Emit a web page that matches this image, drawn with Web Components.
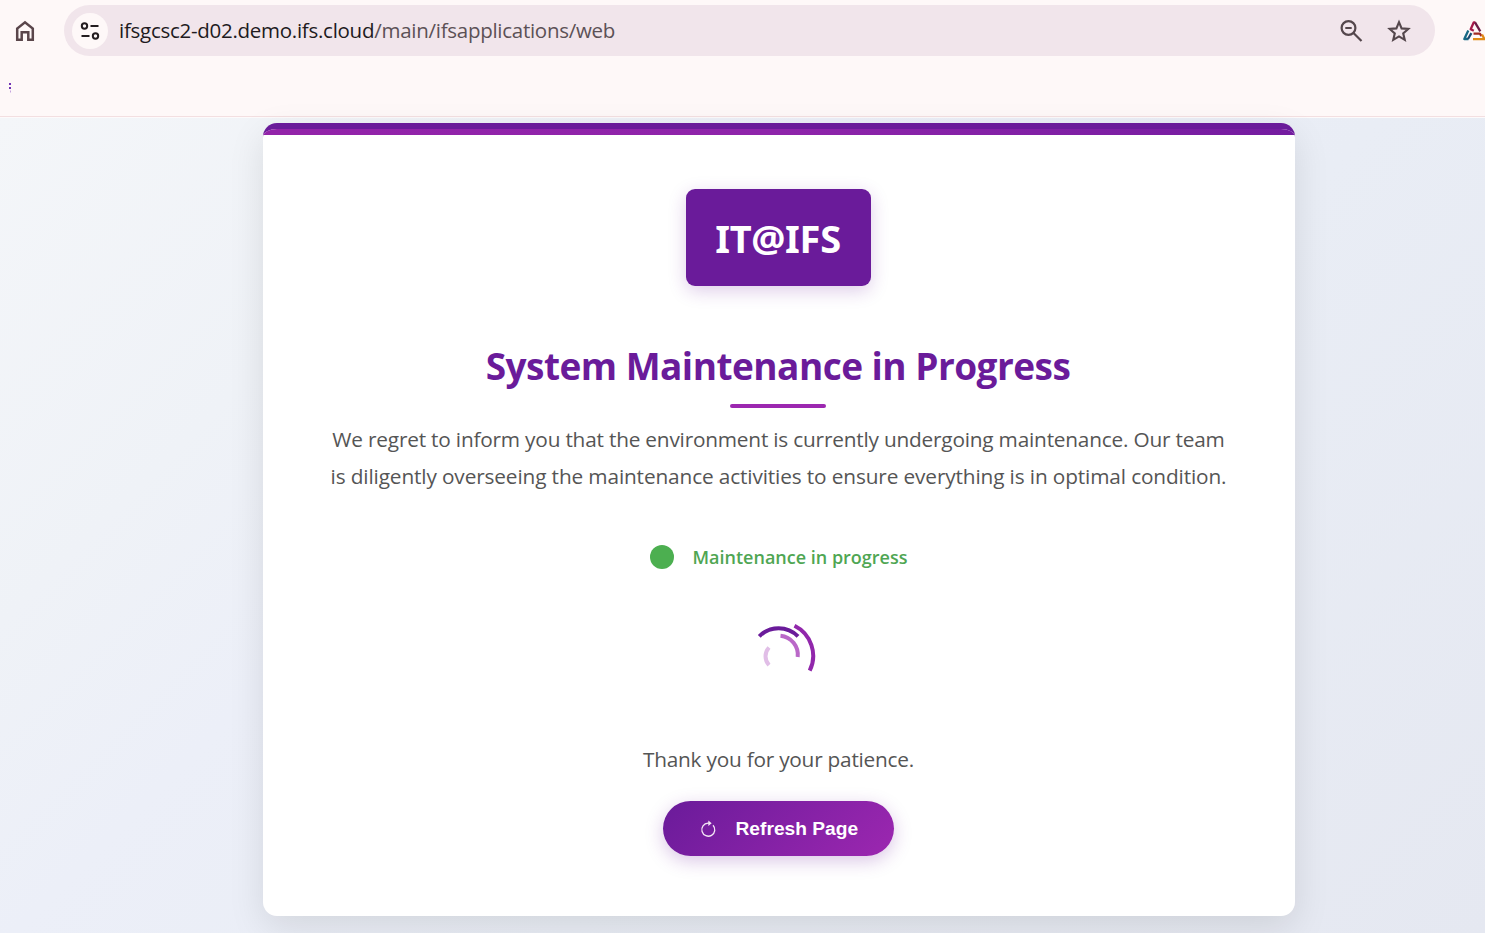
<!DOCTYPE html>
<html lang="en">
<head>
<meta charset="utf-8">
<title>System Maintenance</title>
<style>
  html, body {
    margin: 0;
    height: 100%;
    background: #fff;
    overflow: hidden;
  }
</style>
</head>
<body>
<app-window>
  <browser-toolbar slot="toolbar" host="ifsgcsc2-d02.demo.ifs.cloud" path="/main/ifsapplications/web"></browser-toolbar>
  <maintenance-card>
    <brand-logo slot="logo">IT@IFS</brand-logo>
    <span slot="title">System Maintenance in Progress</span>
    <span slot="line1">We regret to inform you that the environment is currently undergoing maintenance. Our team</span>
    <span slot="line2">is diligently overseeing the maintenance activities to ensure everything is in optimal condition.</span>
    <status-indicator slot="status">Maintenance in progress</status-indicator>
    <loading-spinner slot="spinner"></loading-spinner>
    <span slot="thanks">Thank you for your patience.</span>
    <refresh-button slot="action">Refresh Page</refresh-button>
  </maintenance-card>
</app-window>

<script>
class AppWindow extends HTMLElement {
  connectedCallback() {
    this.attachShadow({ mode: 'open' });
    this.shadowRoot.innerHTML = `
      <style>
        :host {
          display: flex;
          flex-direction: column;
          width: 1485px;
          height: 933px;
          overflow: hidden;
          font-family: "Open Sans", "Noto Sans", sans-serif;
        }

        main {
          flex: 1;
          min-height: 0;
          display: flex;
          justify-content: center;
          align-items: flex-start;
          padding: 5px 0 0 73px;
          background: linear-gradient(135deg, #f4f6f9 0%, #eff2f7 22%, #eceff8 36%, #e9edf5 60%, #e5e8f1 100%);
        }
      </style>
      <slot name="toolbar"></slot>
      <main><slot></slot></main>
    `;
  }
}

class BrowserToolbar extends HTMLElement {
  connectedCallback() {
    this.attachShadow({ mode: 'open' });
    this.shadowRoot.innerHTML = `
      <style>
        :host {
          display: block;
          box-sizing: border-box;
          height: 118px;
          flex: none;
          background: #fef8f8;
          border-bottom: 1px solid #fdfafb;
        }

        .bar {
          display: flex;
          align-items: center;
          height: 51px;
          padding: 5px 0 0 14px;
        }

        svg {
          display: block;
          flex: none;
        }

        .address {
          display: flex;
          align-items: center;
          box-sizing: border-box;
          width: 1371px;
          height: 51px;
          margin: 0 27px 0 28px;
          padding: 0 24px 0 8px;
          border-radius: 26px;
          background: #f1e5eb;
          flex: none;
        }

        .tune {
          display: grid;
          place-items: center;
          width: 36px;
          height: 36px;
          border-radius: 50%;
          background: #fef8f8;
          margin-right: 11px;
        }

        .url {
          flex: 1;
          font-size: 20.5px;
          letter-spacing: -0.27px;
          line-height: 30px;
          padding-bottom: 2px;
          white-space: nowrap;
          color: #5c5156;
        }

        .url b {
          font-weight: 400;
          color: #211a1d;
        }

        .zoom { margin-right: 24px; }

        .bookmarks {
          box-sizing: border-box;
          height: 61px;
          padding: 26px 0 0 9px;
          border-bottom: 1px solid #f3dfe1;
        }
      </style>
      <div class="bar">
        <svg width="22" height="24" viewBox="0 0 22 24" fill="none" stroke="#5a464b" stroke-width="2.5">
          <path d="M3.2 20.8V9.5L11 3.3l7.800 6.200v11.300h-4.500v-7.500H7.700v7.500z"/>
        </svg>
        <div class="address">
          <div class="tune">
            <svg width="20" height="20" viewBox="0 0 20 20" fill="none" stroke="#231c1f" stroke-width="2">
              <circle cx="4.500" cy="5" r="2.700"/>
              <path d="M10.500 5H18.500M1.500 15h8"/>
              <circle cx="15.500" cy="15" r="2.700"/>
            </svg>
          </div>
          <div class="url"><b>${this.getAttribute('host')}</b>${this.getAttribute('path')}</div>
          <svg class="zoom" width="24" height="24" viewBox="0 0 24 24" fill="none" stroke="#54474c" stroke-width="2.200">
            <circle cx="9.500" cy="9" r="6.900"/>
            <path d="M14.500 14l8 8M6.300 9h6.400"/>
          </svg>
          <svg width="24" height="24" viewBox="0 0 24 24" fill="none" stroke="#54474c" stroke-width="2.100">
            <path d="M12 3.200l2.600 6.200 6.700.55-5.100 4.400 1.550 6.550L12 17.400l-5.750 3.500 1.550-6.550-5.100-4.400 6.700-.55z"/>
          </svg>
        </div>
        <svg width="23" height="22" viewBox="0 0 23 22" fill="none" stroke-width="2.300" stroke-linejoin="round">
          <path d="M11.800 10.800L8.700 9.300 11.800 2.300h1.600" stroke="#a5194a"/>
          <path d="M13 2.300l5.300 9" stroke="#6b1c46"/>
          <path d="M6.300 10.500L2.300 19h4.200" stroke="#176884"/>
          <path d="M6 19l3.400-5.800" stroke="#1b4b72"/>
          <path d="M11.500 13.600h6.300l1.800 2.600" stroke="#a12a24"/>
          <path d="M11 19.200h11.500L20 14.500" stroke="#e08a16"/>
        </svg>
      </div>
      <div class="bookmarks">
        <svg width="3" height="11" viewBox="0 0 3 11">
          <path d="M0 1h2v2H0zM0 5h2v2H0z" fill="#7034b4"/>
          <path d="M1 8.500h1v2H1z" fill="#c4a3de"/>
        </svg>
      </div>
    `;
  }
}

class MaintenanceCard extends HTMLElement {
  connectedCallback() {
    this.attachShadow({ mode: 'open' });
    this.shadowRoot.innerHTML = `
      <style>
        :host {
          display: flex;
          flex-direction: column;
          align-items: center;
          box-sizing: border-box;
          width: 1032px;
          height: 793px;
          padding-right: 2px;
          border-top: 6px solid #6a1b9a;
          border-radius: 14px;
          overflow: hidden;
          background: #fff;
          box-shadow: 0 12px 36px rgba(0, 0, 0, 0.1);
          color: #555;
          white-space: nowrap;
        }

        .stripe {
          align-self: flex-start;
          width: 1032px;
          height: 6px;
          flex: none;
          margin-bottom: 54px;
          background: linear-gradient(90deg, #9323a9, #8e24aa 50%, #741ca0);
        }

        h1 {
          margin: 53px 0 0;
          font-size: 37px;
          line-height: 54px;
          font-weight: 700;
          letter-spacing: -0.53px;
          color: #6a1b9a;
        }

        .rule {
          width: 96px;
          height: 4px;
          margin: 11px 0 13px;
          border-radius: 2px;
          background: #9c27b0;
        }

        p {
          margin: 0;
          padding-left: 1px;
          font-size: 20.8px;
          line-height: 37px;
          text-align: center;
        }

        .p1 { letter-spacing: -0.2px; }
        .p2 { letter-spacing: -0.13px; }

        .status { margin: 43px 0 0 1px; }
        .spinner { margin-top: 42px; }
        .thanks {
          margin: 47px 0 23px;
          letter-spacing: -0.23px;
        }
      </style>
      <div class="stripe"></div>
      <slot name="logo"></slot>
      <h1><slot name="title"></slot></h1>
      <div class="rule"></div>
      <p class="p1"><slot name="line1"></slot></p>
      <p class="p2"><slot name="line2"></slot></p>
      <div class="status"><slot name="status"></slot></div>
      <div class="spinner"><slot name="spinner"></slot></div>
      <p class="thanks"><slot name="thanks"></slot></p>
      <slot name="action"></slot>
    `;
  }
}

class BrandLogo extends HTMLElement {
  connectedCallback() {
    this.attachShadow({ mode: 'open' });
    this.shadowRoot.innerHTML = `
      <style>
        :host {
          display: flex;
          align-items: center;
          justify-content: center;
          flex: none;
          box-sizing: border-box;
          width: 185px;
          height: 97px;
          padding-top: 1px;
          border-radius: 9px;
          background: #6a1b9a;
          box-shadow: 0 5px 18px rgba(106, 27, 154, 0.22);
          color: #fff;
          font-family: "Noto Sans", "Open Sans", sans-serif;
          font-size: 38px;
          font-weight: 700;
          letter-spacing: -0.3px;
        }
      </style>
      <slot></slot>
    `;
  }
}

class StatusIndicator extends HTMLElement {
  connectedCallback() {
    this.attachShadow({ mode: 'open' });
    this.shadowRoot.innerHTML = `
      <style>
        :host {
          display: flex;
          align-items: center;
          gap: 19px;
          height: 38px;
          color: #4fa653;
          font-size: 18px;
          font-weight: 600;
        }

        .dot {
          width: 24px;
          height: 24px;
          border-radius: 50%;
          background: #4caf50;
        }
      </style>
      <span class="dot"></span>
      <slot></slot>
    `;
  }
}

class LoadingSpinner extends HTMLElement {
  connectedCallback() {
    this.attachShadow({ mode: 'open' });
    this.shadowRoot.innerHTML = `
      <style>
        :host { display: block; }
        svg { display: block; }
      </style>
      <svg width="76" height="76" viewBox="0 0 76 76" fill="none" stroke-width="4">
        <path d="M19.300 18.300A27 27 0 0 1 58 18.300" stroke="#6a1b9a"/>
        <path d="M54.500 7.800A33.500 33.500 0 0 1 69.700 52.700" stroke="#9127ab"/>
        <path d="M40.500 17.700A19.200 19.200 0 0 1 57.700 39" stroke="#ba68c8"/>
        <path d="M29 29.500A13 13 0 0 0 29 47.200" stroke="#e1bee7"/>
      </svg>
    `;
  }
}

class RefreshButton extends HTMLElement {
  connectedCallback() {
    this.attachShadow({ mode: 'open' });
    this.shadowRoot.innerHTML = `
      <style>
        :host {
          display: block;
          flex: none;
        }

        button {
          display: flex;
          align-items: center;
          box-sizing: border-box;
          width: 231px;
          height: 55px;
          padding: 0 0 0 37px;
          gap: 20px;
          border: 0;
          border-radius: 28px;
          background: linear-gradient(135deg, #6a1b9a, #9c27b0);
          box-shadow: 0 5px 18px rgba(106, 27, 154, 0.25);
          color: #fff;
          font: 700 19.2px "Liberation Sans", Arial, sans-serif;
          white-space: nowrap;
        }
      </style>
      <button>
        <svg width="16" height="18" viewBox="0 0 16 18" fill="none" stroke="#f3e5f5" stroke-width="1.300">
          <path d="M9.500 3.200H8A6.500 6.500 0 1 0 13 5.200"/>
          <path d="M8.300 0.400l3.400 2.800-3.400 2.800z" fill="#f3e5f5" stroke="none"/>
        </svg>
        <span><slot></slot></span>
      </button>
    `;
  }
}

customElements.define('app-window', AppWindow);
customElements.define('browser-toolbar', BrowserToolbar);
customElements.define('maintenance-card', MaintenanceCard);
customElements.define('brand-logo', BrandLogo);
customElements.define('status-indicator', StatusIndicator);
customElements.define('loading-spinner', LoadingSpinner);
customElements.define('refresh-button', RefreshButton);
</script>
</body>
</html>
